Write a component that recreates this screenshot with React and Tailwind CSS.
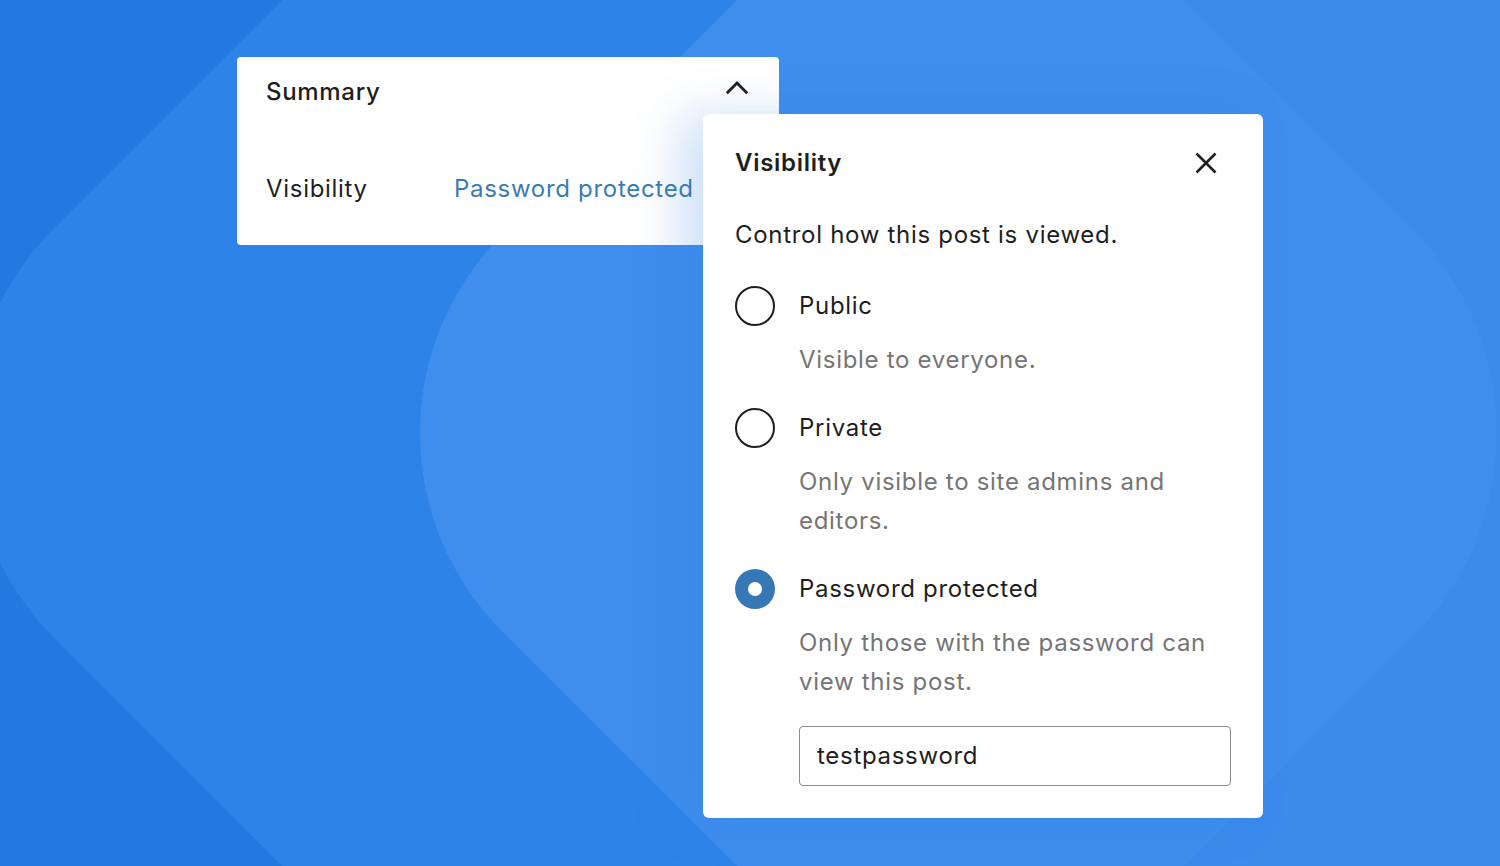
import React from "react";

const OPTIONS = [
  { id: "public", label: "Public", description: "Visible to everyone." },
  {
    id: "private",
    label: "Private",
    description: "Only visible to site admins and editors.",
  },
  {
    id: "password",
    label: "Password protected",
    description: "Only those with the password can view this post.",
  },
];

function Backdrop() {
  // two big rounded diamonds layered over the blue
  return (
    <svg
      className="absolute inset-0"
      width="1500"
      height="866"
      viewBox="0 0 1500 866"
      aria-hidden="true"
    >
      <defs>
        <clipPath id="shapeA">
          <rect x="108" y="-192" width="1250" height="1250" rx="290" transform="rotate(45 733 433)" />
        </clipPath>
      </defs>
      <rect x="0" y="0" width="1500" height="866" fill="#2479e1" />
      <rect x="108" y="-192" width="1250" height="1250" rx="290" transform="rotate(45 733 433)" fill="#2d83e8" />
      <rect x="563" y="-192" width="1250" height="1250" rx="280" transform="rotate(45 1188 433)" fill="#3b8aec" />
      <g clipPath="url(#shapeA)">
        <rect x="563" y="-192" width="1250" height="1250" rx="280" transform="rotate(45 1188 433)" fill="#3f8eee" />
      </g>
    </svg>
  );
}

function ChevronUp() {
  return (
    <svg width="24" height="14" viewBox="0 0 24 14" fill="none" aria-hidden="true">
      <path d="M1.8 12.2 L12 2 L22.2 12.2" stroke="#1e1e1e" strokeWidth="2.8" />
    </svg>
  );
}

function CloseIcon() {
  return (
    <svg width="22" height="22" viewBox="0 0 22 22" fill="none" aria-hidden="true">
      <path d="M1.5 1.5 L20.5 20.5 M20.5 1.5 L1.5 20.5" stroke="#1e1e1e" strokeWidth="2.5" />
    </svg>
  );
}

function Radio({ checked }) {
  if (checked) {
    return (
      <span className="flex h-10 w-10 shrink-0 items-center justify-center rounded-full bg-[#3677b6]">
        <span className="h-[14px] w-[14px] rounded-full bg-white" />
      </span>
    );
  }
  return <span className="h-10 w-10 shrink-0 rounded-full border-2 border-[#1e1e1e]" />;
}

function VisibilityPopover() {
  const selected = "password";
  return (
    <div className="absolute left-[466px] top-[57px] w-[560px] rounded-md bg-white pb-8 pl-[32px] pr-8 pt-[34px] shadow-[-24px_0_48px_rgba(40,120,225,0.22)]">
      <div className="flex items-center justify-between">
        <h2 className="text-[24px] font-semibold leading-[30px] text-[#1e1e1e]">Visibility</h2>
        <button className="mr-[14px] flex h-[30px] items-center">
          <CloseIcon />
        </button>
      </div>
      <p className="mt-[42px] text-[24px] leading-[30px] text-[#1e1e1e]">
        Control how this post is viewed.
      </p>
      <div className="mt-[36px]">
        {OPTIONS.map((opt, i) => (
          <div key={opt.id} className={i === 0 ? "" : "mt-[29px]"}>
            <label className="flex h-10 items-center gap-[24px]">
              <Radio checked={opt.id === selected} />
              <span className="text-[24px] leading-[30px] text-[#1e1e1e]">{opt.label}</span>
            </label>
            <p className="ml-[64px] mt-[14px] text-[24px] leading-[39px] text-[#757575]">
              {opt.description}
            </p>
          </div>
        ))}
      </div>
      <div className="ml-[64px] mt-[25px] flex h-[60px] items-center rounded-[4px] border-[1.5px] border-[#8c8c8c] px-[17px]">
        <span className="text-[24px] text-[#1e1e1e]">testpassword</span>
      </div>
    </div>
  );
}

export default function App() {
  return (
    <div
      className="relative h-[866px] w-[1500px] overflow-hidden tracking-[0.7px]"
      style={{ fontFamily: "Inter, 'Noto Sans', 'Liberation Sans', sans-serif" }}
    >
      <Backdrop />
      <div className="relative pl-[237px] pt-[57px]">
        <div className="relative w-[542px]">
          <div className="rounded-[4px] bg-white pb-[41px] pl-[29px] pr-[30px] pt-5">
            <div className="flex items-center justify-between">
              <span className="text-[24px] font-medium leading-[30px] text-[#1e1e1e]">Summary</span>
              <span className="-mt-2">
                <ChevronUp />
              </span>
            </div>
            <div className="mt-[67px] flex items-center">
              <span className="w-[188px] text-[24px] leading-[30px] text-[#1e1e1e]">Visibility</span>
              <span className="text-[24px] leading-[30px] text-[#3a7bb5]">Password protected</span>
            </div>
          </div>
          <VisibilityPopover />
        </div>
      </div>
    </div>
  );
}
